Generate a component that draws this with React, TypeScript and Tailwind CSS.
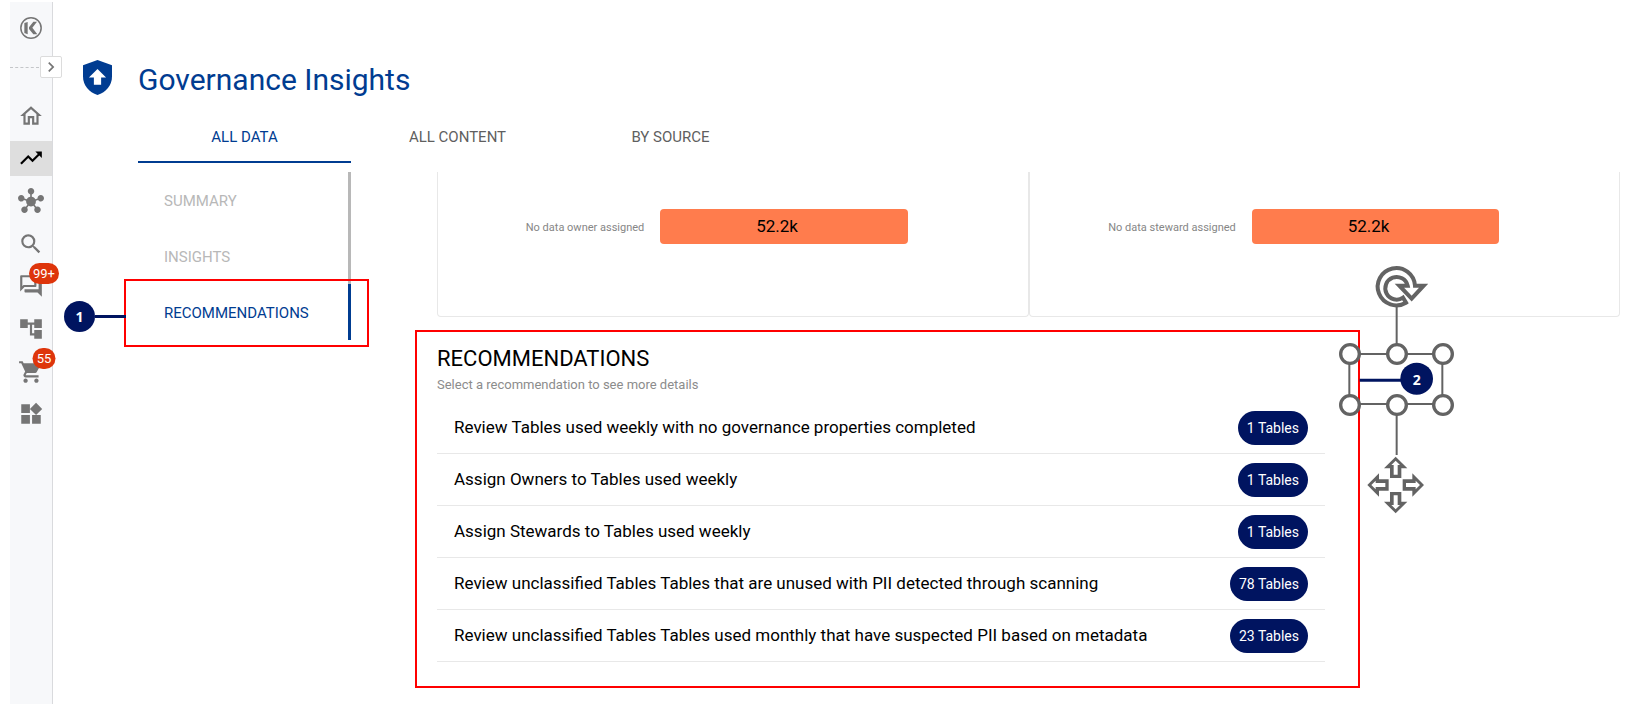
import {
  MdAccountTree,
  MdChevronRight,
  MdHub,
  MdOutlineHome,
  MdOutlineQuestionAnswer,
  MdSearch,
  MdShoppingCart,
  MdTrendingUp,
  MdWidgets,
} from "react-icons/md";
import type { IconType } from "react-icons";

interface NavItem {
  label: string;
  icon: IconType;
  active?: boolean;
  badge?: string;
}

const NAV_ITEMS: NavItem[] = [
  { label: "Home", icon: MdOutlineHome },
  { label: "Insights", icon: MdTrendingUp, active: true },
  { label: "Hub", icon: MdHub },
  { label: "Search", icon: MdSearch },
  { label: "Questions", icon: MdOutlineQuestionAnswer, badge: "99+" },
  { label: "Lineage", icon: MdAccountTree },
  { label: "Cart", icon: MdShoppingCart, badge: "55" },
  { label: "Applications", icon: MdWidgets },
];

const TABS = ["ALL DATA", "ALL CONTENT", "BY SOURCE"];

const SECTIONS = ["SUMMARY", "INSIGHTS", "RECOMMENDATIONS"];

const CHARTS = [
  { label: "No data owner assigned", value: "52.2k" },
  { label: "No data steward assigned", value: "52.2k" },
];

const RECOMMENDATIONS = [
  { title: "Review Tables used weekly with no governance properties completed", count: 1 },
  { title: "Assign Owners to Tables used weekly", count: 1 },
  { title: "Assign Stewards to Tables used weekly", count: 1 },
  { title: "Review unclassified Tables Tables that are unused with PII detected through scanning", count: 78 },
  { title: "Review unclassified Tables Tables used monthly that have suspected PII based on metadata", count: 23 },
];

function Logo() {
  return (
    <svg viewBox="0 0 66 66" className="w-[22px] h-[22px]" aria-hidden="true">
      <circle cx="33" cy="33" r="30.5" fill="none" stroke="#757575" strokeWidth="4.5" />
      <path d="M13 18l10-3v37l-10-4z" fill="#757575" />
      <path d="M27 31L40 14h11L37 32l15 20H40L27 36z" fill="#757575" />
    </svg>
  );
}

function ShieldIcon() {
  return (
    <svg viewBox="0 0 88 106" className="w-[29px] h-[35px]" aria-hidden="true">
      <path d="M44 0l44 16v34c0 26-18 49-44 56C18 99 0 76 0 50V16z" fill="#003c91" />
      <path d="M44 27l26 26H55v22H33V53H18z" fill="#fff" />
    </svg>
  );
}

function Sidebar() {
  return (
    <aside className="w-[43px] shrink-0 bg-[#f7f8fa] border-r border-[#d9dadd]">
      <a href="#" aria-label="Home page" className="flex justify-center pt-[15px]">
        <Logo />
      </a>
      <div className="relative h-[22px] mt-[17px] flex items-center">
        <div className="w-[29px] border-t border-dashed border-[#c4c6c9]" />
        <button
          aria-label="Expand menu"
          className="absolute left-[30px] w-[22px] h-[22px] bg-white border border-[#dcdcdc] rounded-xs flex items-center justify-center text-[#757575]"
        >
          <MdChevronRight size={20} />
        </button>
      </div>
      <nav className="mt-[20px] h-[334px] flex flex-col justify-between">
        {NAV_ITEMS.map(({ label, icon: Icon, active, badge }) => (
          <a
            key={label}
            href="#"
            aria-label={label}
            className={`relative h-[35px] flex items-center justify-center ${
              active ? "bg-[#dedede] text-black" : "text-[#757575]"
            }`}
          >
            <Icon size={26} />
            {badge && (
              <span className="absolute left-[34px] -translate-x-1/2 -top-[6px] h-[21px] min-w-[23px] px-1 rounded-full bg-[#de350b] text-white text-[13px] leading-[21px] text-center">
                {badge}
              </span>
            )}
          </a>
        ))}
      </nav>
    </aside>
  );
}

// Red frame and numbered marker around the selected section
function SectionCallout() {
  return (
    <div className="absolute -top-[5px] -bottom-[7px] -left-[14px] -right-[21px] border-2 border-[#ff0000] pointer-events-none">
      <div className="absolute right-full top-[20px] flex items-center">
        <span className="w-[31px] h-[31px] rounded-full bg-[#001460] text-white text-sm font-bold font-['Open_Sans',sans-serif] flex items-center justify-center">
          1
        </span>
        <span className="w-[31px] h-[3px] bg-[#001460]" />
      </div>
    </div>
  );
}

const HANDLES = [
  [150, 312],
  [291, 312],
  [429, 312],
  [150, 465],
  [291, 465],
  [429, 465],
];

// Second marker, drawn as a selected shape with its resize, rotate and move handles
function SelectedCallout() {
  return (
    <svg
      viewBox="114 42 354 756"
      className="absolute -top-[68px] -right-[98px] w-[118px] h-[252px] pointer-events-none"
    >
      <path d="M290 168V290M290 490V615" stroke="#636363" strokeWidth="6" />
      <rect x="148" y="312" width="279" height="150" fill="none" stroke="#636363" strokeWidth="6" />
      <path d="M179 391H310" stroke="#001460" strokeWidth="9" />
      <ellipse cx="350" cy="386" rx="49" ry="48" fill="#001460" />
      <text
        x="350"
        y="404"
        textAnchor="middle"
        fill="#fff"
        fontSize="42"
        className="font-bold font-['Open_Sans',sans-serif]"
      >
        2
      </text>
      {HANDLES.map(([cx, cy]) => (
        <circle key={`${cx}-${cy}`} cx={cx} cy={cy} r="28" fill="#fff" stroke="#636363" strokeWidth="10" />
      ))}
      <path
        d="M345 107A56 56 0 1 0 318 158L309 143A34 34 0 1 1 323 107H298L335 146L371 107Z"
        fill="#fff"
        stroke="#636363"
        strokeWidth="12"
      />
      {[0, 90, 180, 270].map((angle) => (
        <g key={angle} transform={`rotate(${angle} 287 705)`}>
          <path d="M287 620L322 655H304V684H270V655H252Z" fill="#636363" />
          <path d="M287 632L300 645H293V674H281V645H274Z" fill="#fff" />
        </g>
      ))}
    </svg>
  );
}

export default function App() {
  return (
    <div className="min-h-screen flex bg-white pl-[10px] pt-[2px] font-['Roboto',sans-serif] text-black">
      <Sidebar />

      <main className="flex-1 min-w-0 pl-[30px] pr-[10px] pt-[58px]">
        <header className="flex items-start gap-[26px]">
          <ShieldIcon />
          <h1 className="text-[30px] leading-[40px] text-[#003c91]">Governance Insights</h1>
        </header>

        <div className="pl-[55px]">
          <div role="tablist" className="flex mt-[11px]">
            {TABS.map((tab, i) => (
              <button
                key={tab}
                role="tab"
                aria-selected={i === 0}
                className={`w-[213px] h-[52px] pt-[2px] text-[15px] border-b-2 ${
                  i === 0 ? "border-[#003c91] text-[#003c91]" : "border-transparent text-[#5f5f5f]"
                }`}
              >
                {tab}
              </button>
            ))}
          </div>

          <div className="flex items-start gap-[64px] mt-[9px]">
            <nav className="w-[213px] shrink-0">
              {SECTIONS.map((section) => {
                const selected = section === "RECOMMENDATIONS";
                return (
                  <a
                    key={section}
                    href="#"
                    className={`relative h-[56px] pl-[26px] pt-[2px] flex items-center text-[15px] border-r-3 ${
                      selected ? "border-[#003c91] text-[#003c91]" : "border-[#b8b8b8] text-[#b8b8b8]"
                    }`}
                  >
                    {section}
                    {selected && <SectionCallout />}
                  </a>
                );
              })}
            </nav>

            <div className="flex-1 min-w-0">
              <div className="pl-[22px] flex">
                {CHARTS.map((chart) => (
                  <div
                    key={chart.label}
                    className="flex-1 h-[145px] flex items-start gap-4 pt-[37px] border border-t-0 border-[#e8e8e8] rounded-b"
                  >
                    <div className="w-[35%] text-right text-[11px] leading-[37px] text-[#868686]">
                      {chart.label}
                    </div>
                    <div className="w-[42%] h-[35px] pr-[14px] rounded bg-[#ff7c4d] text-center text-[17px] leading-[35px]">
                      {chart.value}
                    </div>
                  </div>
                ))}
              </div>

              <section className="relative max-w-[945px] mt-[13px] pl-[20px] pr-[33px] pt-[13px] pb-[24px] border-2 border-[#ff0000]">
                <h2 className="text-[22px] leading-[28px]">RECOMMENDATIONS</h2>
                <p className="mt-[2px] text-[13px] leading-[20px] text-[#8c8c8c]">
                  Select a recommendation to see more details
                </p>
                <ul className="mt-[7px]">
                  {RECOMMENDATIONS.map(({ title, count }) => (
                    <li key={title} className="border-b border-[#e8e8e8]">
                      <button className="w-full h-[51px] px-[17px] flex items-center justify-between text-left text-[17px]">
                        {title}
                        <span className="h-[34px] px-[9px] rounded-full bg-[#001460] text-white text-[14px] leading-[34px]">
                          {count} Tables
                        </span>
                      </button>
                    </li>
                  ))}
                </ul>
                <SelectedCallout />
              </section>
            </div>
          </div>
        </div>
      </main>
    </div>
  );
}
